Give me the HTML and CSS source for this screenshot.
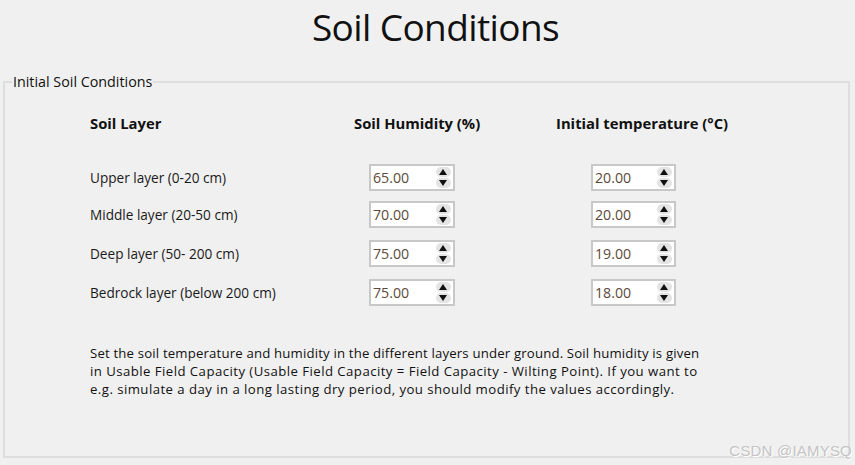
FILE: index.html
```html
<!DOCTYPE html>
<html>
<head>
<meta charset="utf-8">
<link rel="stylesheet" href="styles.css">
</head>
<body>
<h1 class="title">Soil Conditions</h1>
<fieldset class="group">
  <legend class="group-legend">Initial Soil Conditions</legend>
  <div class="headers">
    <span class="h-layer">Soil Layer</span>
    <span class="h-hum">Soil Humidity (%)</span>
    <span class="h-temp">Initial temperature (°C)</span>
  </div>
  <div class="rows">
    <div class="row">
      <span class="label">Upper layer (0-20 cm)</span>
      <div class="spin"><span class="val">65.00</span><span class="arrows"><i class="up"></i><i class="down"></i></span></div>
      <div class="spin temp"><span class="val">20.00</span><span class="arrows"><i class="up"></i><i class="down"></i></span></div>
    </div>
    <div class="row">
      <span class="label">Middle layer (20-50 cm)</span>
      <div class="spin"><span class="val">70.00</span><span class="arrows"><i class="up"></i><i class="down"></i></span></div>
      <div class="spin temp"><span class="val">20.00</span><span class="arrows"><i class="up"></i><i class="down"></i></span></div>
    </div>
    <div class="row r3">
      <span class="label">Deep layer (50- 200 cm)</span>
      <div class="spin"><span class="val">75.00</span><span class="arrows"><i class="up"></i><i class="down"></i></span></div>
      <div class="spin temp"><span class="val">19.00</span><span class="arrows"><i class="up"></i><i class="down"></i></span></div>
    </div>
    <div class="row r4">
      <span class="label">Bedrock layer (below 200 cm)</span>
      <div class="spin"><span class="val">75.00</span><span class="arrows"><i class="up"></i><i class="down"></i></span></div>
      <div class="spin temp"><span class="val">18.00</span><span class="arrows"><i class="up"></i><i class="down"></i></span></div>
    </div>
  </div>
  <p class="note"><span class="l1">Set the soil temperature and humidity in the different layers under ground. Soil humidity is given</span><br><span class="l2">in Usable Field Capacity (Usable Field Capacity = Field Capacity - Wilting Point). If you want to</span><br><span class="l3">e.g. simulate a day in a long lasting dry period, you should modify the values accordingly.</span></p>
</fieldset>
<div class="watermark">CSDN @IAMYSQ</div>
</body>
</html>
```
FILE: styles.css
```css
html, body {
  margin: 0;
  padding: 0;
  background: #f0f0f0;
  width: 855px;
  height: 465px;
  overflow: hidden;
  font-family: "Open Sans", "Noto Sans", sans-serif;
  color: #1a1a1a;
  position: relative;
}
.title {
  margin: 0;
  height: 72px;
  padding-top: 5px;
  box-sizing: border-box;
  text-align: center;
  font-weight: 400;
  font-size: 37px;
  line-height: 44px;
  color: #111;
  letter-spacing: -0.6px;
  padding-left: 16px;
}
.group {
  margin: 0 5px 0 3px;
  border: 2px solid #dedede;
  padding: 0 0 0 85px;
  height: 386px;
  box-sizing: border-box;
}
.group-legend {
  font-size: 14.3px;
  padding: 0 1px;
  margin-left: -78px;
  color: #111;
}
.headers {
  display: flex;
  font-weight: 700;
  font-size: 14.8px;
  margin-top: 22px;
  height: 20px;
  line-height: 20px;
  color: #111;
}
.h-layer { width: 264px; }
.h-hum { width: 202px; }
.rows {
  margin-top: 31px;
  display: flex;
  flex-direction: column;
  gap: 10px;
}
.row {
  display: grid;
  grid-template-columns: 279px 86px 136px 85px;
  align-items: center;
  height: 27px;
  font-size: 13.6px;
}
.row.r3, .row.r4 { margin-top: 2px; }
.spin {
  grid-column: 2;
  height: 27px;
  box-sizing: border-box;
  border: 2px solid #c8c8c8;
  background: #fff;
  display: flex;
  align-items: center;
  justify-content: space-between;
  padding: 0 2px 0 2px;
}
.spin.temp { grid-column: 4; }
.val {
  color: #5c4a3a;
  font-size: 14.2px;
}
.arrows {
  width: 15px;
  height: 21px;
  display: flex;
  flex-direction: column;
  gap: 1px;
}
.arrows i {
  display: block;
  flex: 1;
  border-radius: 6px;
  background: #e4e4e4;
  position: relative;
}
.arrows i::after {
  content: "";
  position: absolute;
  left: 3px;
  border-left: 4.5px solid transparent;
  border-right: 4.5px solid transparent;
}
.arrows .up::after {
  top: 2px;
  border-bottom: 6px solid #111;
}
.arrows .down::after {
  top: 2px;
  border-top: 6px solid #111;
}
.note {
  margin: 38px 0 0 0;
  font-size: 13.2px;
  line-height: 18px;
  color: #111;
}
.l1 { letter-spacing: 0.17px; }
.l2 { letter-spacing: 0.45px; }
.l3 { letter-spacing: 0.45px; }
.watermark {
  position: absolute;
  right: 3px;
  bottom: 6px;
  font-family: "Liberation Sans", Arial, sans-serif;
  font-size: 15px;
  color: #c4c4c4;
  text-shadow: 1px 1px 0 #fff;
  letter-spacing: 0.2px;
}
```
